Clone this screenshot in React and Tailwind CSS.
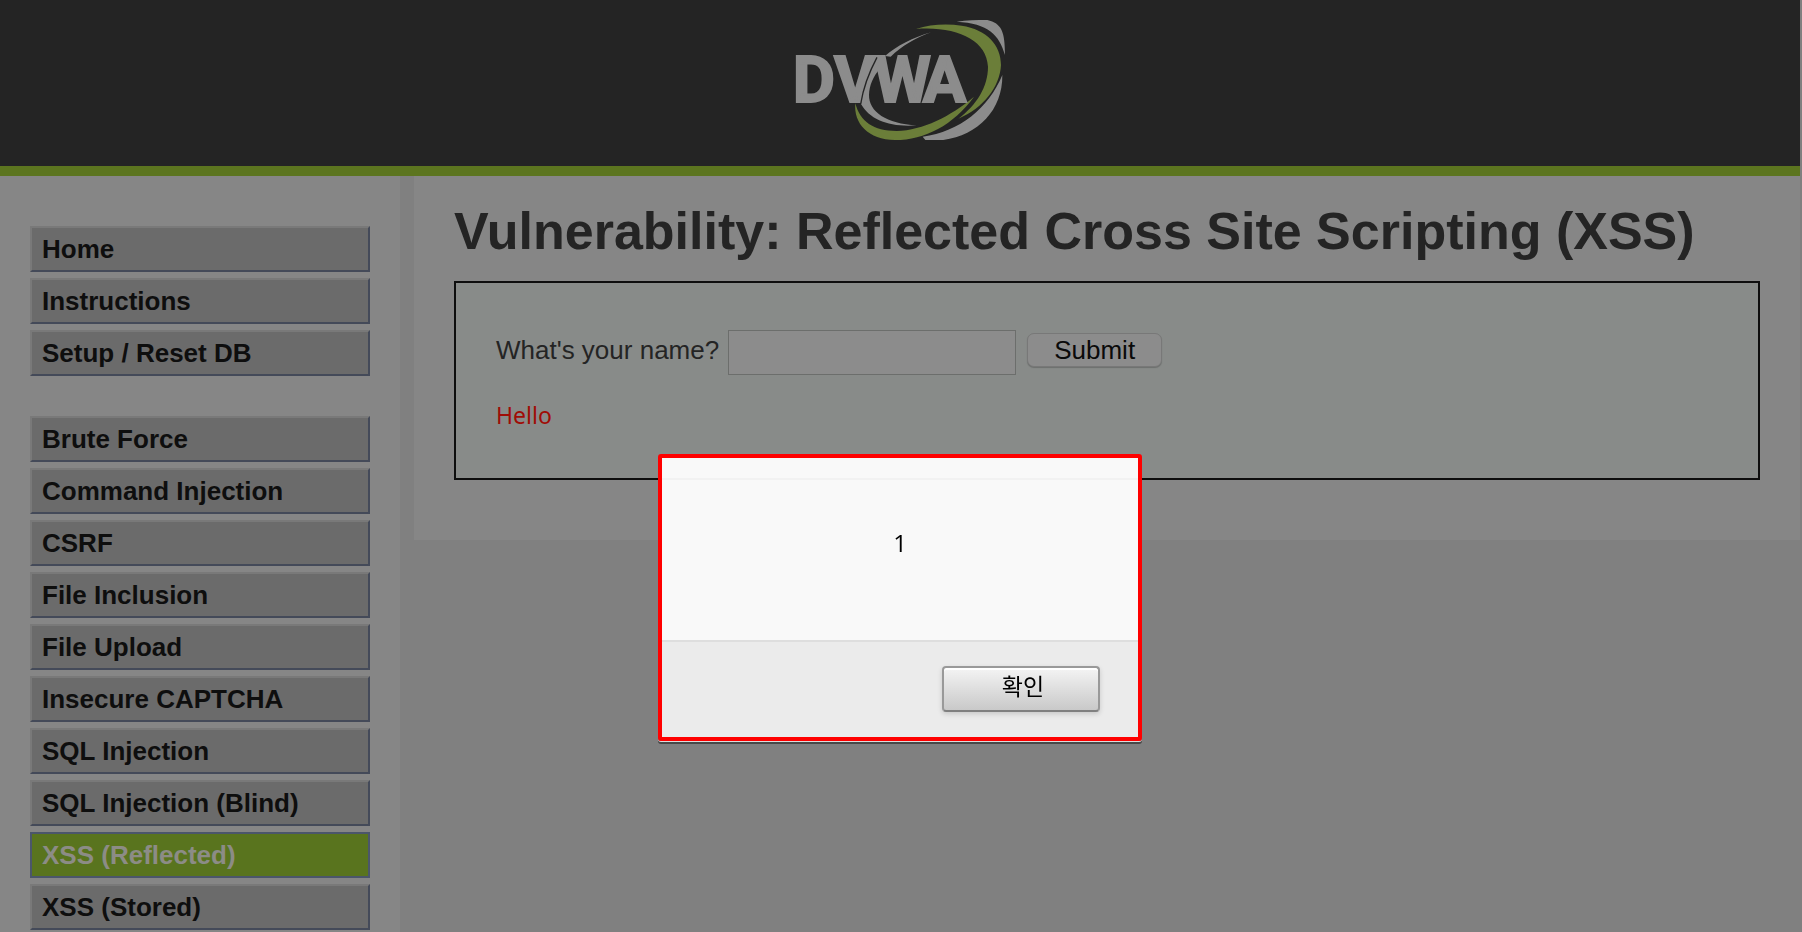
const mainLinks = ['Home', 'Instructions', 'Setup / Reset DB'];

const vulnLinks = [
  'Brute Force',
  'Command Injection',
  'CSRF',
  'File Inclusion',
  'File Upload',
  'Insecure CAPTCHA',
  'SQL Injection',
  'SQL Injection (Blind)',
  'XSS (Reflected)',
  'XSS (Stored)',
];

const Logo = () => (
  <svg viewBox="30 60 660 360" className="w-[220px] h-[120px]" role="img" aria-label="DVWA">
    <path fill="#8c8c8c" d="M530 65C560 60 590 60 622 60C665 70 675 95 675 165C658 105 625 70 530 65Z" />
    <path fill="#8c8c8c" d="M667 225C668 330 595 405 490 420L436 420L428 410C540 395 625 325 667 225Z" />
    <path fill="#6b7e39" d="M408 87C450 73 500 71 545 77C620 88 663 135 663 195C660 260 610 325 535 356C590 315 624 260 624 200C620 120 530 78 408 87Z" />
    <path fill="#6b7e39" d="M582 290C520 375 435 420 345 420C265 420 220 370 226 310C240 365 280 393 350 393C430 390 510 350 582 290Z" />
    <path fill="#8c8c8c" d="M453 97C400 112 350 138 315 168L332 170C365 138 405 115 453 97Z" />
    <text
      x="38 162 282 428"
      y="307"
      fontSize="195"
      fontWeight="700"
      fill="#8c8c8c"
      stroke="#8c8c8c"
      strokeWidth="6"
      fontFamily="Roboto, sans-serif"
    >
      DVWA
    </text>
    <path
      fill="#8c8c8c"
      d="M290 176C268 215 250 262 243 312C270 360 330 382 410 376C320 372 266 335 267 285C268 255 280 230 300 205Z"
    />
    <path fill="none" stroke="#242424" strokeWidth="4" d="M291 172C268 215 250 262 242 312" />
  </svg>
);

const MenuItem = ({ label, active }) => (
  <li>
    <a
      href="#"
      className={
        active
          ? 'block h-[46px] border-2 border-[#4b566a] bg-[#59741e] px-[10px] text-[26px] leading-[42px] font-bold text-[#8c8c86]'
          : 'block h-[46px] border-2 border-t-[#797979] border-l-[#797979] border-r-[#444a59] border-b-[#444a59] bg-[#6b6b6b] px-[10px] text-[26px] leading-[42px] font-bold text-[#0e0e0e]'
      }
    >
      {label}
    </a>
  </li>
);

const AlertDialog = () => (
  <div
    role="alertdialog"
    aria-label="1"
    className="fixed top-[454px] left-1/2 -ml-[243px] w-[484px] rounded-[3px] border-4 border-[#ff0000] shadow-[0_1px_0_#dddddd,0_3px_0_#484848] font-['Open_Sans','Noto_Sans_CJK_KR',sans-serif] text-black"
  >
    <div className="flex h-[182px] items-center justify-center bg-white/95 text-2xl">
      <p className="pb-3">1</p>
    </div>
    <div className="flex h-[97px] items-start justify-end border-t-2 border-[#dedede] bg-[#ebebeb] px-[38px] pt-6">
      <button
        type="button"
        className="h-[46px] w-[158px] rounded-[4px] border-2 border-[#999999] border-b-[#808080] bg-linear-to-b from-[#f4f4f4] to-[#c9c9c9] pb-2 pl-1 text-[23px] leading-[34px] shadow-[inset_0_2px_0_#ffffff,0_2px_5px_rgba(0,0,0,0.15)] font-['Noto_Sans_CJK_KR',sans-serif]"
      >
        확인
      </button>
    </div>
  </div>
);

const App = () => {
  return (
    <div className="flex h-screen flex-col overflow-hidden bg-[#808080] pr-[2px] font-['Liberation_Sans',Arial,sans-serif]">
      <header className="flex h-44 shrink-0 justify-center border-b-10 border-[#5c751f] bg-[#242424] pt-5">
        <Logo />
      </header>

      <div className="flex min-h-0 grow items-start gap-[14px]">
        <nav className="h-full w-[400px] shrink-0 bg-[#868686] px-[30px] pt-[50px]">
          <ul className="mb-10 flex flex-col gap-[6px]">
            {mainLinks.map((label) => (
              <MenuItem key={label} label={label} />
            ))}
          </ul>
          <ul className="flex flex-col gap-[6px]">
            {vulnLinks.map((label) => (
              <MenuItem key={label} label={label} active={label === 'XSS (Reflected)'} />
            ))}
          </ul>
        </nav>

        <main className="grow bg-[#868686] px-10 pt-[25px] pb-[60px]">
          <h1 className="text-[52px] leading-[60px] font-bold text-[#242424]">
            Vulnerability: Reflected Cross Site Scripting (XSS)
          </h1>

          <div className="mt-5 h-[199px] border-2 border-[#0e0e0e] bg-[#888b89] px-10 pt-[47px]">
            <form className="flex items-center text-[26px]" onSubmit={(e) => e.preventDefault()}>
              <label htmlFor="name" className="pb-1 text-[#242424]">
                What's your name?
              </label>
              <input
                id="name"
                type="text"
                className="ml-[9px] h-[45px] w-[288px] border border-[#6c6e6c] bg-[#8c8c8c] px-2 outline-none"
              />
              <button
                type="submit"
                className="mb-[6px] ml-[11px] h-[34px] w-[135px] rounded-[7px] border border-[#787878] bg-[#8c8c8c] leading-[30px] text-[#0a0a0a] shadow-[0_1px_1px_rgba(0,0,0,0.2)]"
              >
                Submit
              </button>
            </form>
            <p className="mt-6 font-['Noto_Sans',sans-serif] text-[23px] leading-8 text-[#a00c06]">Hello</p>
          </div>
        </main>
      </div>

      <AlertDialog />
    </div>
  );
};

export default App;
